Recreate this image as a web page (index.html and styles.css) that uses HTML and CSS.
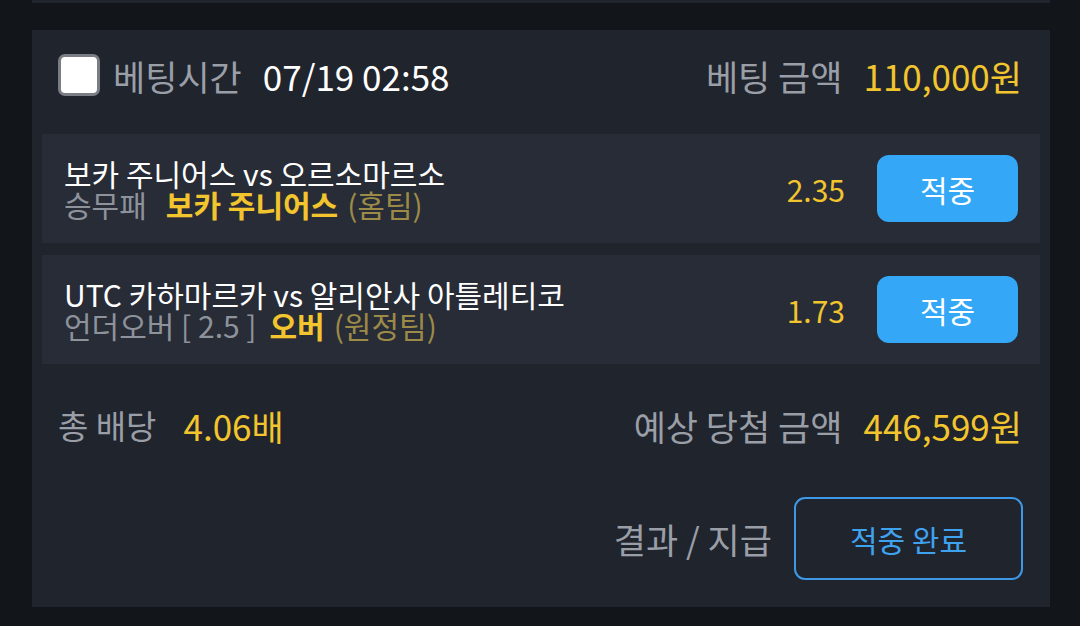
FILE: index.html
```html
<!DOCTYPE html>
<html>

<head>
    <title>Bet slip</title>
    <link rel="stylesheet" href="styles.css">
</head>

<body>
    <div class="prev-card"></div>

    <div class="card">
        <div class="head">
            <div class="left">
                <span class="checkbox"></span>
                <span class="label">베팅시간</span>
                <span class="time">07/19 02:58</span>
            </div>
            <div class="right">
                <span class="label">베팅 금액</span>
                <span class="amount">110,000원</span>
            </div>
        </div>

        <div class="game">
            <div class="info">
                <div class="title">보카 주니어스 vs 오르소마르소</div>
                <div class="sub">
                    <span class="type wide">승무패</span>
                    <span class="pick">보카 주니어스</span>
                    <span class="side">(홈팀)</span>
                </div>
            </div>
            <span class="odds">2.35</span>
            <button class="hit">적중</button>
        </div>

        <div class="game">
            <div class="info">
                <div class="title">UTC 카하마르카 vs 알리안사 아틀레티코</div>
                <div class="sub">
                    <span class="type">언더오버 [ 2.5 ]</span>
                    <span class="pick">오버</span>
                    <span class="side">(원정팀)</span>
                </div>
            </div>
            <span class="odds">1.73</span>
            <button class="hit">적중</button>
        </div>

        <div class="total">
            <div class="left">
                <span class="label small">총 배당</span>
                <span class="amount odd-total">4.06배</span>
            </div>
            <div class="right">
                <span class="label">예상 당첨 금액</span>
                <span class="amount">446,599원</span>
            </div>
        </div>

        <div class="foot">
            <span class="label">결과 / 지급</span>
            <button class="done">적중 완료</button>
        </div>
    </div>
</body>

</html>
```

FILE: styles.css
```css
body {
    margin: 0;
    background-color: #12151a;
    font-family: "Noto Sans CJK KR", "Noto Sans", sans-serif;
    height: 626px;
    overflow: hidden;
}

.prev-card {
    margin: 0 30px 0 32px;
    height: 3px;
    background-color: #20242d;
}

.card {
    margin: 27px 30px 0 32px;
    background-color: #20242d;
    padding: 0 10px 27px;
}

.head,
.total {
    display: flex;
    justify-content: space-between;
    align-items: center;
    padding: 0 18px 0 16px;
    font-size: 35px;
}

.head {
    height: 90px;
    margin-bottom: 14px;
}

.left,
.right {
    display: flex;
    align-items: center;
}

.checkbox {
    width: 36px;
    height: 36px;
    border: 3px solid #7a7d84;
    border-radius: 7px;
    background-color: #fff;
    margin-right: 13px;
}

.label {
    color: #9a9ea7;
}

.label.small {
    font-size: 33px;
}

.time {
    color: #fff;
    margin-left: 21px;
}

.amount {
    color: #f2c42e;
    margin-left: 21px;
}

.odd-total {
    margin-left: 27px;
}

.game {
    display: flex;
    align-items: center;
    height: 109px;
    padding: 0 22px;
    margin-bottom: 12px;
    background-color: #272c37;
}

.info {
    flex: 1;
}

.title {
    color: #fff;
    font-size: 30px;
    line-height: 31px;
}

.sub {
    display: flex;
    font-size: 30px;
    line-height: 31px;
}

.type {
    color: #8e929b;
    margin-right: 13px;
}

.type.wide {
    margin-right: 19px;
}

.pick {
    color: #f2c42e;
    font-weight: bold;
    margin-right: 9px;
}

.side {
    color: #9c8a47;
}

.odds {
    color: #f2c42e;
    font-size: 30px;
    margin-right: 32px;
}

button {
    font-family: inherit;
    cursor: pointer;
}

.hit {
    width: 141px;
    height: 67px;
    border: none;
    border-radius: 12px;
    background-color: #34a8f6;
    color: #fff;
    font-size: 30px;
}

.total {
    height: 98px;
}

.foot {
    display: flex;
    justify-content: flex-end;
    align-items: center;
    margin-top: 23px;
    padding-right: 17px;
    font-size: 35px;
}

.done {
    width: 229px;
    height: 83px;
    margin-left: 22px;
    border: 2px solid #3d99e6;
    border-radius: 11px;
    background-color: transparent;
    color: #3fa2ef;
    font-size: 30px;
}
```
